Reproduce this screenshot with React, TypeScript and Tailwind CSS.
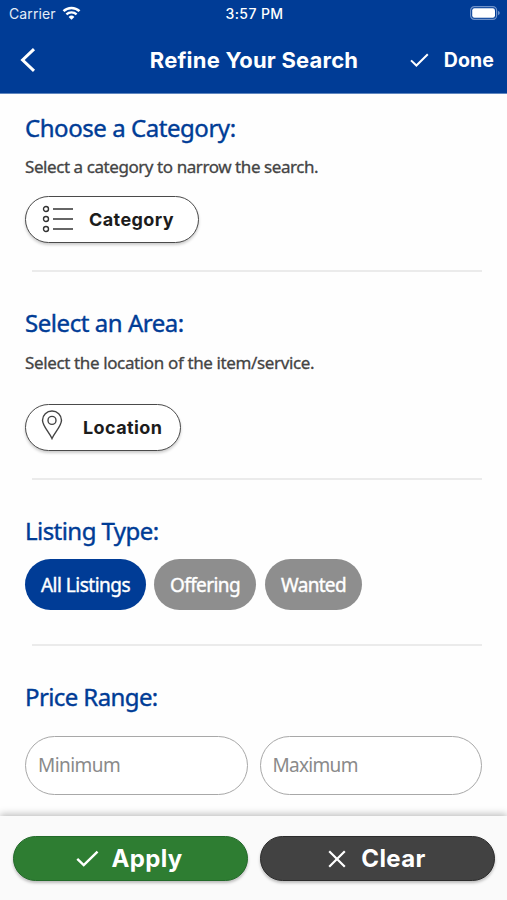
import React from "react";

interface HeadingProps {
  text: string;
  className: string;
}

const Heading = (props: HeadingProps) => {
  return (
    <h2
      className={`h-8 leading-8 whitespace-nowrap text-2xl text-[#003c96] [-webkit-text-stroke:0.4px_#003c96] ${props.className}`}
    >
      {props.text}
    </h2>
  );
};

const Check = ({ className }: { className: string }) => (
  <svg className={className} viewBox="0 0 22 16" fill="none" stroke="white">
    <path d="M1.2 8.4 7.4 14.4 20.6 1.4" strokeWidth="2.3" />
  </svg>
);

const Divider = () => <hr className="ml-[7px] border-0 h-[2px] bg-[#ebebeb]" />;

const Header = () => {
  return (
    <header className="h-[94px] shrink-0 bg-[#003c96] border-b border-[#5f86bf] text-white font-[Inter,sans-serif]">
      <div className="grid grid-cols-3 items-center h-7 pl-[9px] pr-[7px] text-[13px] leading-7">
        <div className="flex items-center gap-[6px] text-[#e4ecf7]">
          <span className="text-[14px] tracking-[0.1px]">Carrier</span>
          <svg className="w-[19px] h-[14px] -mt-0.5" viewBox="0 0 18 14" fill="none" stroke="white">
            <path d="M1 5.2a11.4 11.4 0 0 1 16 0" strokeWidth="2.5" />
            <path d="M3.9 8.4a7.3 7.3 0 0 1 10.2 0" strokeWidth="2.3" />
            <path d="M6.1 10.9a4.2 4.2 0 0 1 5.8 0L9 13.8z" fill="white" stroke="none" />
          </svg>
        </div>
        <span className="text-center whitespace-nowrap font-medium text-[14px] tracking-[0.4px]">3:57 PM</span>
        <svg className="justify-self-end w-[30px] h-[14px] -mt-0.5" viewBox="0 0 30 14">
          <rect x="0.6" y="0.6" width="26" height="12.8" rx="3.8" fill="none" stroke="#6f92c9" strokeWidth="1.2" />
          <rect x="2.2" y="2.2" width="22.8" height="9.6" rx="2.2" fill="white" />
          <path d="M28 4.8q1.8.7 1.8 2.2T28 9.2z" fill="#6f92c9" />
        </svg>
      </div>
      <div className="grid grid-cols-[100px_1fr_100px] items-center h-[64px] pl-5 pr-[13px]">
        <svg className="w-4 h-6" viewBox="0 0 16 24" fill="none" stroke="white">
          <path d="M14 1.2 2.6 12 14 22.8" strokeWidth="3" />
        </svg>
        <h1 className="flex justify-center -ml-[6px] whitespace-nowrap font-bold text-[22px] tracking-[0.2px]">
          Refine Your Search
        </h1>
        <div className="flex items-center justify-end gap-[15px] font-bold text-[19.5px] tracking-[0.1px]">
          <Check className="w-[19px] h-[14px]" />
          <span className="pt-px">Done</span>
        </div>
      </div>
    </header>
  );
};

interface OutlineProps {
  label: string;
  className: string;
  children: React.ReactNode;
}

const OutlineButton = (props: OutlineProps) => {
  return (
    <button
      className={`flex items-center h-[47px] rounded-full border-[1.5px] border-[#4a4a4a] bg-white shadow-[0_2px_3px_rgba(0,0,0,0.2)] font-[Inter,sans-serif] font-bold text-[18px] text-[#1c1c1c] ${props.className}`}
    >
      {props.children}
      <span className="pb-px">{props.label}</span>
    </button>
  );
};

const ListIcon = () => (
  <svg className="w-[31px] h-[28px] -mt-px" viewBox="0 0 31 28" fill="none" stroke="#333">
    {[4, 14, 24].map((y) => (
      <g key={y}>
        <circle cx="4" cy={y} r="2.5" strokeWidth="1.4" />
        <path d={`M11 ${y}h20`} strokeWidth="1.5" />
      </g>
    ))}
  </svg>
);

const PinIcon = () => (
  <svg className="w-[22px] h-[30px] -mt-[5px]" viewBox="0 0 22 30" fill="none" stroke="#444" strokeWidth="1.4">
    <path d="M11 28.5C8.5 22.5 1.5 16 1.5 10.2a9.5 9.2 0 0 1 19 0C20.5 16 13.5 22.5 11 28.5z" />
    <circle cx="11" cy="10.4" r="4" />
  </svg>
);

const chips = [
  { label: "All Listings", style: "w-[121px] bg-[#003c96] mr-2 tracking-[-0.5px]" },
  { label: "Offering", style: "w-[102px] bg-[#8e8e8e] mr-[9px] tracking-[-0.6px]" },
  { label: "Wanted", style: "w-[97px] bg-[#8e8e8e] tracking-[-0.7px]" },
];

const App = () => {
  return (
    <div className="flex flex-col h-[900px] w-[507px] overflow-hidden bg-[#fefefe] font-['Noto_Sans',sans-serif]">
      <Header />
      <main className="flex-1 pl-[25px] pr-[25px]">
        <section>
          <Heading text="Choose a Category:" className="mt-[18px] tracking-[-0.45px]" />
          <p className="mt-[11px] h-6 leading-6 whitespace-nowrap text-[17px] tracking-[-0.43px] text-[#444] [-webkit-text-stroke:0.3px_#444]">
            Select a category to narrow the search.
          </p>
          <OutlineButton label="Category" className="mt-[17px] w-[174px] pl-4 gap-[16px] tracking-[0.4px]">
            <ListIcon />
          </OutlineButton>
        </section>
        <div className="mt-[27px]">
          <Divider />
        </div>
        <section>
          <Heading text="Select an Area:" className="mt-[35px] tracking-[-0.45px]" />
          <p className="mt-[12px] h-6 leading-6 whitespace-nowrap text-[17px] tracking-[-0.37px] text-[#444] [-webkit-text-stroke:0.3px_#444]">
            Select the location of the item/service.
          </p>
          <OutlineButton label="Location" className="mt-[29px] w-[156px] pl-[15px] gap-[20px] tracking-[0.4px]">
            <PinIcon />
          </OutlineButton>
        </section>
        <div className="mt-[27px]">
          <Divider />
        </div>
        <section>
          <Heading text="Listing Type:" className="mt-[35px] tracking-[-0.55px]" />
          <div className="flex mt-[12px]">
            {chips.map((chip) => (
              <button
                key={chip.label}
                className={`h-[51px] pt-0.5 rounded-full text-center whitespace-nowrap text-[19px] text-white [-webkit-text-stroke:0.4px_white] ${chip.style}`}
              >
                {chip.label}
              </button>
            ))}
          </div>
        </section>
        <div className="mt-[34px]">
          <Divider />
        </div>
        <section>
          <Heading text="Price Range:" className="mt-[35px] tracking-[-0.6px]" />
          <div className="grid grid-cols-2 gap-3 mt-[23px]">
            <input
              className="w-full h-[59px] pl-3 pb-0.5 rounded-full border-[1.5px] border-[#a8a8a8] bg-white text-[19px] tracking-[-0.55px] placeholder:text-[#8a8a8a]"
              placeholder="Minimum"
            />
            <input
              className="w-full h-[59px] pl-3 pb-0.5 rounded-full border-[1.5px] border-[#a8a8a8] bg-white text-[19px] tracking-[-0.7px] placeholder:text-[#8a8a8a]"
              placeholder="Maximum"
            />
          </div>
        </section>
      </main>
      <footer className="grid grid-cols-2 gap-3 h-[84px] shrink-0 px-[12.5px] pt-5 bg-[#fafafa] shadow-[0_-2px_7px_rgba(0,0,0,0.25)] font-[Inter,sans-serif]">
        <button className="flex items-center justify-center gap-[13px] h-[45px] pr-0.5 rounded-full border-[1.5px] border-[#236a2a] bg-[#2e7d32] shadow-[0_2px_3px_rgba(0,0,0,0.25)] text-white font-bold text-2xl tracking-[0.3px]">
          <Check className="w-[23px] h-[17px]" />
          Apply
        </button>
        <button className="flex items-center justify-center gap-[15px] h-[45px] rounded-full border-[1.5px] border-[#2c2c2c] bg-[#424242] shadow-[0_2px_3px_rgba(0,0,0,0.25)] text-white font-bold text-2xl tracking-[0.4px]">
          <svg className="w-[18px] h-[18px]" viewBox="0 0 18 18" fill="none" stroke="white" strokeWidth="2.2">
            <path d="M1.2 1.2 16.8 16.8M16.8 1.2 1.2 16.8" />
          </svg>
          Clear
        </button>
      </footer>
    </div>
  );
};

export default App;
